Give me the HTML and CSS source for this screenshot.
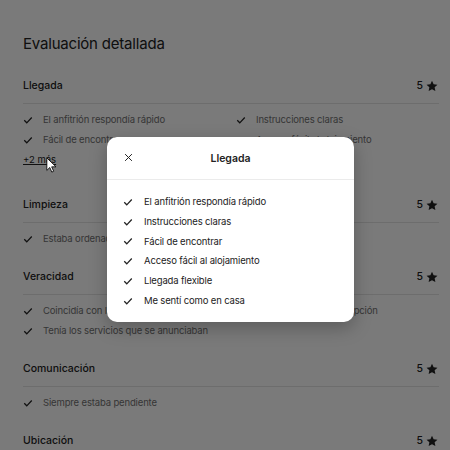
FILE: index.html
```html
<!DOCTYPE html>
<html lang="es">
<head>
    <meta charset="UTF-8">
    <title>Evaluación detallada</title>
    <link rel="stylesheet" href="styles.css">
</head>
<body>
    <div class="page">
        <h2 class="title">Evaluación detallada</h2>

        <section class="category">
            <div class="cat-head"><span>Llegada</span><span class="score">5 <svg class="star" viewBox="0 0 32 32"><path d="M16 2l4.3 9.3 10.2 1.2-7.5 7 2 10.1L16 24.6 7 29.6l2-10.1-7.5-7 10.2-1.2z"/></svg></span></div>
            <ul class="items two-col">
                <li><svg class="check" viewBox="0 0 32 32"><path d="M4 17l8 8L28 8"/></svg>El anfitrión respondía rápido</li>
                <li><svg class="check" viewBox="0 0 32 32"><path d="M4 17l8 8L28 8"/></svg>Instrucciones claras</li>
                <li><svg class="check" viewBox="0 0 32 32"><path d="M4 17l8 8L28 8"/></svg>Fácil de encontrar</li>
                <li><svg class="check" viewBox="0 0 32 32"><path d="M4 17l8 8L28 8"/></svg>Acceso fácil al alojamiento</li>
            </ul>
            <a class="more">+2 más</a>
        </section>

        <section class="category">
            <div class="cat-head"><span>Limpieza</span><span class="score">5 <svg class="star" viewBox="0 0 32 32"><path d="M16 2l4.3 9.3 10.2 1.2-7.5 7 2 10.1L16 24.6 7 29.6l2-10.1-7.5-7 10.2-1.2z"/></svg></span></div>
            <ul class="items two-col">
                <li><svg class="check" viewBox="0 0 32 32"><path d="M4 17l8 8L28 8"/></svg>Estaba ordenado y limpio</li>
            </ul>
        </section>

        <section class="category">
            <div class="cat-head"><span>Veracidad</span><span class="score">5 <svg class="star" viewBox="0 0 32 32"><path d="M16 2l4.3 9.3 10.2 1.2-7.5 7 2 10.1L16 24.6 7 29.6l2-10.1-7.5-7 10.2-1.2z"/></svg></span></div>
            <ul class="items two-col">
                <li><svg class="check" viewBox="0 0 32 32"><path d="M4 17l8 8L28 8"/></svg>Coincidía con las fotos</li>
                <li><svg class="check" viewBox="0 0 32 32"><path d="M4 17l8 8L28 8"/></svg>Se ajustaba a la descripción</li>
                <li><svg class="check" viewBox="0 0 32 32"><path d="M4 17l8 8L28 8"/></svg>Tenía los servicios que se anunciaban</li>
            </ul>
        </section>

        <section class="category">
            <div class="cat-head"><span>Comunicación</span><span class="score">5 <svg class="star" viewBox="0 0 32 32"><path d="M16 2l4.3 9.3 10.2 1.2-7.5 7 2 10.1L16 24.6 7 29.6l2-10.1-7.5-7 10.2-1.2z"/></svg></span></div>
            <ul class="items two-col">
                <li><svg class="check" viewBox="0 0 32 32"><path d="M4 17l8 8L28 8"/></svg>Siempre estaba pendiente</li>
            </ul>
        </section>

        <section class="category">
            <div class="cat-head"><span>Ubicación</span><span class="score">5 <svg class="star" viewBox="0 0 32 32"><path d="M16 2l4.3 9.3 10.2 1.2-7.5 7 2 10.1L16 24.6 7 29.6l2-10.1-7.5-7 10.2-1.2z"/></svg></span></div>
        </section>
    </div>

    <div class="overlay"></div>

    <svg class="cursor" viewBox="0 0 12 19"><path d="M1 1v15l3.5-3.5 2.5 5.5 2.2-1-2.4-5.3H12z"/></svg>

    <div class="modal">
        <div class="modal-head">
            <svg class="close" viewBox="0 0 32 32"><path d="M4 4l24 24M28 4L4 28"/></svg>
            <span class="modal-title">Llegada</span>
        </div>
        <ul class="items modal-items">
            <li><svg class="check" viewBox="0 0 32 32"><path d="M4 17l8 8L28 8"/></svg>El anfitrión respondía rápido</li>
            <li><svg class="check" viewBox="0 0 32 32"><path d="M4 17l8 8L28 8"/></svg>Instrucciones claras</li>
            <li><svg class="check" viewBox="0 0 32 32"><path d="M4 17l8 8L28 8"/></svg>Fácil de encontrar</li>
            <li><svg class="check" viewBox="0 0 32 32"><path d="M4 17l8 8L28 8"/></svg>Acceso fácil al alojamiento</li>
            <li><svg class="check" viewBox="0 0 32 32"><path d="M4 17l8 8L28 8"/></svg>Llegada flexible</li>
            <li><svg class="check" viewBox="0 0 32 32"><path d="M4 17l8 8L28 8"/></svg>Me sentí como en casa</li>
        </ul>
    </div>
</body>
</html>
```

FILE: styles.css
```css
body {
    margin: 0;
    padding: 0;
    background: #fff;
    color: #222;
    font-family: Inter, "Noto Sans", sans-serif;
    overflow: hidden;
    height: 450px;
}
.page {
    padding: 32px 11px 0 23px;
}
.title {
    margin: 0 0 22px;
    font-size: 15px;
    font-weight: 400;
    line-height: 24px;
    letter-spacing: -0.2px;
}
.category {
    margin-bottom: 20px;
}
.cat-head {
    display: flex;
    justify-content: space-between;
    align-items: center;
    font-size: 10.5px;
    font-weight: 500;
    line-height: 16px;
    padding-bottom: 9px;
    border-bottom: 1px solid #e4e4e4;
    margin-bottom: 6px;
}
.score {
    display: flex;
    align-items: center;
    gap: 3px;
    padding-right: 1px;
}
.star {
    width: 12px;
    height: 12px;
    fill: #222;
}
.items {
    list-style: none;
    margin: 0;
    padding: 0;
}
.items li {
    display: flex;
    align-items: center;
    font-size: 9.5px;
    line-height: 20px;
    letter-spacing: -0.15px;
    color: #717171;
}
.two-col {
    display: grid;
    grid-template-columns: 213px 1fr;
}
.check {
    width: 10px;
    height: 10px;
    margin-right: 10px;
    fill: none;
    stroke: #222;
    stroke-width: 4;
}
.more {
    display: block;
    width: fit-content;
    font-size: 9.5px;
    line-height: 20px;
    color: #222;
    text-decoration: underline;
    padding-bottom: 7px;
}
.overlay {
    position: absolute;
    inset: 0;
    background: rgba(0, 0, 0, 0.52);
}
.cursor {
    position: absolute;
    left: 46px;
    top: 157px;
    width: 10px;
    height: 16px;
    fill: #fff;
    stroke: #000;
    stroke-width: 1;
}
.modal {
    position: absolute;
    left: 107px;
    top: 137px;
    width: 247px;
    height: 185px;
    box-sizing: border-box;
    background: #fff;
    border-radius: 10px;
    box-shadow: 0 6px 18px rgba(0, 0, 0, 0.25);
}
.modal-head {
    position: relative;
    height: 42px;
    display: flex;
    align-items: center;
    justify-content: center;
    border-bottom: 1px solid #ebebeb;
}
.close {
    position: absolute;
    left: 17px;
    top: 16px;
    width: 9px;
    height: 9px;
    stroke: #222;
    stroke-width: 3.5;
}
.modal-title {
    font-size: 10.5px;
    font-weight: 600;
}
.modal-items {
    padding: 12px 0 0 16px;
}
.modal-items li {
    color: #222;
    line-height: 19.8px;
}
.modal-items .check {
    margin-right: 11px;
}
```
